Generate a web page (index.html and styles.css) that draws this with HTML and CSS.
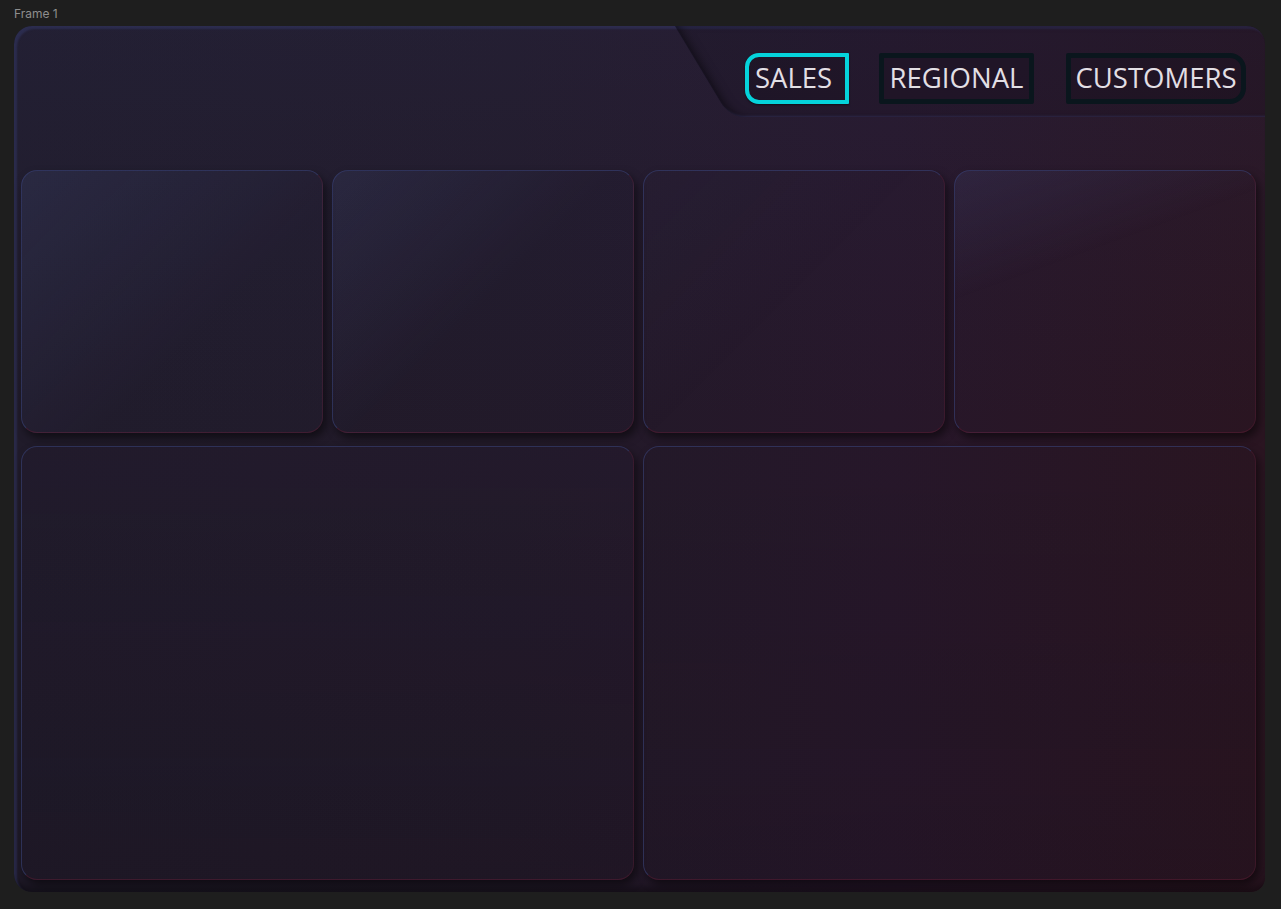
FILE: index.html
```html
<!DOCTYPE html>
<html lang="en">
<head>
<meta charset="utf-8">
<title>Frame 1</title>
<link rel="stylesheet" href="styles.css">
</head>
<body>
<div class="page">
  <div class="frame-label">Frame 1</div>
  <div class="frame">
    <header class="header">
      <div class="title-area"></div>
      <nav class="tabbar">
        <div class="tab tab-sales">SALES</div>
        <div class="tab tab-regional">REGIONAL</div>
        <div class="tab tab-customers">CUSTOMERS</div>
      </nav>
    </header>
    <main class="board">
      <section class="card c1"></section>
      <section class="card c2"></section>
      <section class="card c3"></section>
      <section class="card c4"></section>
      <section class="card wide w1"></section>
      <section class="card wide w2"></section>
    </main>
  </div>
</div>
</body>
</html>
```

FILE: styles.css
```css
* { box-sizing: border-box; }
html, body {
  margin: 0;
  background: #1e1e1e;
  font-family: "Open Sans", "Liberation Sans", sans-serif;
}
.page {
  width: 1281px;
  height: 909px;
  padding: 6px 0 0 14px;
}
.frame-label {
  font-family: Inter, "Liberation Sans", sans-serif;
  font-size: 12px;
  line-height: 16px;
  color: #8e8e8e;
  height: 20px;
}
.frame {
  width: 1251px;
  height: 866px;
  border-radius: 18px 18px 14px 18px;
  overflow: hidden;
  background:
    linear-gradient(180deg, rgba(45, 50, 90, 0.2) 0%, rgba(0, 0, 0, 0) 45%, rgba(0, 0, 0, 0.08) 100%),
    linear-gradient(90deg, #201b2a 0%, #221a29 40%, #27172a 70%, #2a1521 100%);
  box-shadow: inset 3px 3px 2px rgba(60, 70, 130, 0.35), inset 0 -11px 6px -6px rgba(0,0,0,0.35);
  display: flex;
  flex-direction: column;
}
.header {
  height: 91px;
  display: flex;
  flex: none;
}
.title-area {
  width: 661px;
  flex: none;
}
.tabbar {
  position: relative;
  flex: 1;
  display: flex;
  justify-content: flex-end;
  align-items: flex-start;
  padding: 27px 19px 0 0;
  gap: 30px;
}
.tabbar::before {
  content: "";
  position: absolute;
  left: 0;
  top: 0;
  bottom: 0;
  right: -120px;
  transform: skewX(31deg);
  transform-origin: top left;
  background: rgba(10, 6, 14, 0.12);
  box-shadow: inset 7px 0 9px -4px rgba(0, 0, 0, 0.5), inset 0 -2px 2px -1px rgba(60, 60, 110, 0.55);
  border-bottom-left-radius: 14px;
}
.tab {
  position: relative;
  height: 51px;
  border: 4px solid #0a161d;
  color: #e2dfe4;
  font-size: 27.5px;
  line-height: 41px;
  text-align: center;
  background: rgba(20, 12, 22, 0.25);
}
.tab-sales {
  width: 104px;
  padding-left: 6px;
  text-align: left;
  border-color: #05d3db;
  border-radius: 14px 1px 1px 14px;
  box-shadow: 0 1px 2px rgba(0,0,0,0.5);
}
.tab-regional {
  width: 155px;
  border-width: 5px;
  line-height: 39px;
  border-radius: 2px;
}
.tab-customers {
  width: 180px;
  margin-left: 2px;
  border-width: 5px;
  line-height: 39px;
  border-radius: 2px 16px 16px 2px;
}
.board {
  flex: 1;
  display: grid;
  grid-template-columns: repeat(4, 302px);
  grid-template-rows: 263px 434px;
  column-gap: 9px;
  row-gap: 13px;
  padding: 53px 9px 12px 7px;
}
.card {
  border-radius: 16px;
  border: 1px solid;
  border-color: rgba(58, 68, 120, 0.6) rgba(90, 30, 55, 0.4) rgba(100, 30, 55, 0.45) rgba(58, 68, 120, 0.6);
  background: linear-gradient(135deg, rgba(70, 80, 135, 0.16) 0%, rgba(0, 0, 0, 0) 45%);
  box-shadow: 3px 5px 9px rgba(0, 0, 0, 0.5);
}
.c1 { background: linear-gradient(135deg, rgba(75, 88, 140, 0.2) 0%, rgba(40, 40, 70, 0.1) 60%); }
.c2 { background: linear-gradient(135deg, rgba(75, 88, 140, 0.18) 0%, rgba(30, 30, 60, 0.06) 50%); }
.c3 { background: linear-gradient(135deg, rgba(60, 60, 100, 0.05) 0%, rgba(0, 0, 0, 0) 50%); }
.c4 { background: linear-gradient(160deg, rgba(75, 80, 130, 0.2) 0%, rgba(0, 0, 0, 0) 35%); }
.wide { grid-column: span 2; }
.w1 { background: linear-gradient(180deg, rgba(40, 30, 60, 0.12), rgba(20, 5, 20, 0.06)); }
.w2 { background: linear-gradient(180deg, rgba(30, 20, 40, 0.04), rgba(0, 0, 0, 0.02)); }
```
